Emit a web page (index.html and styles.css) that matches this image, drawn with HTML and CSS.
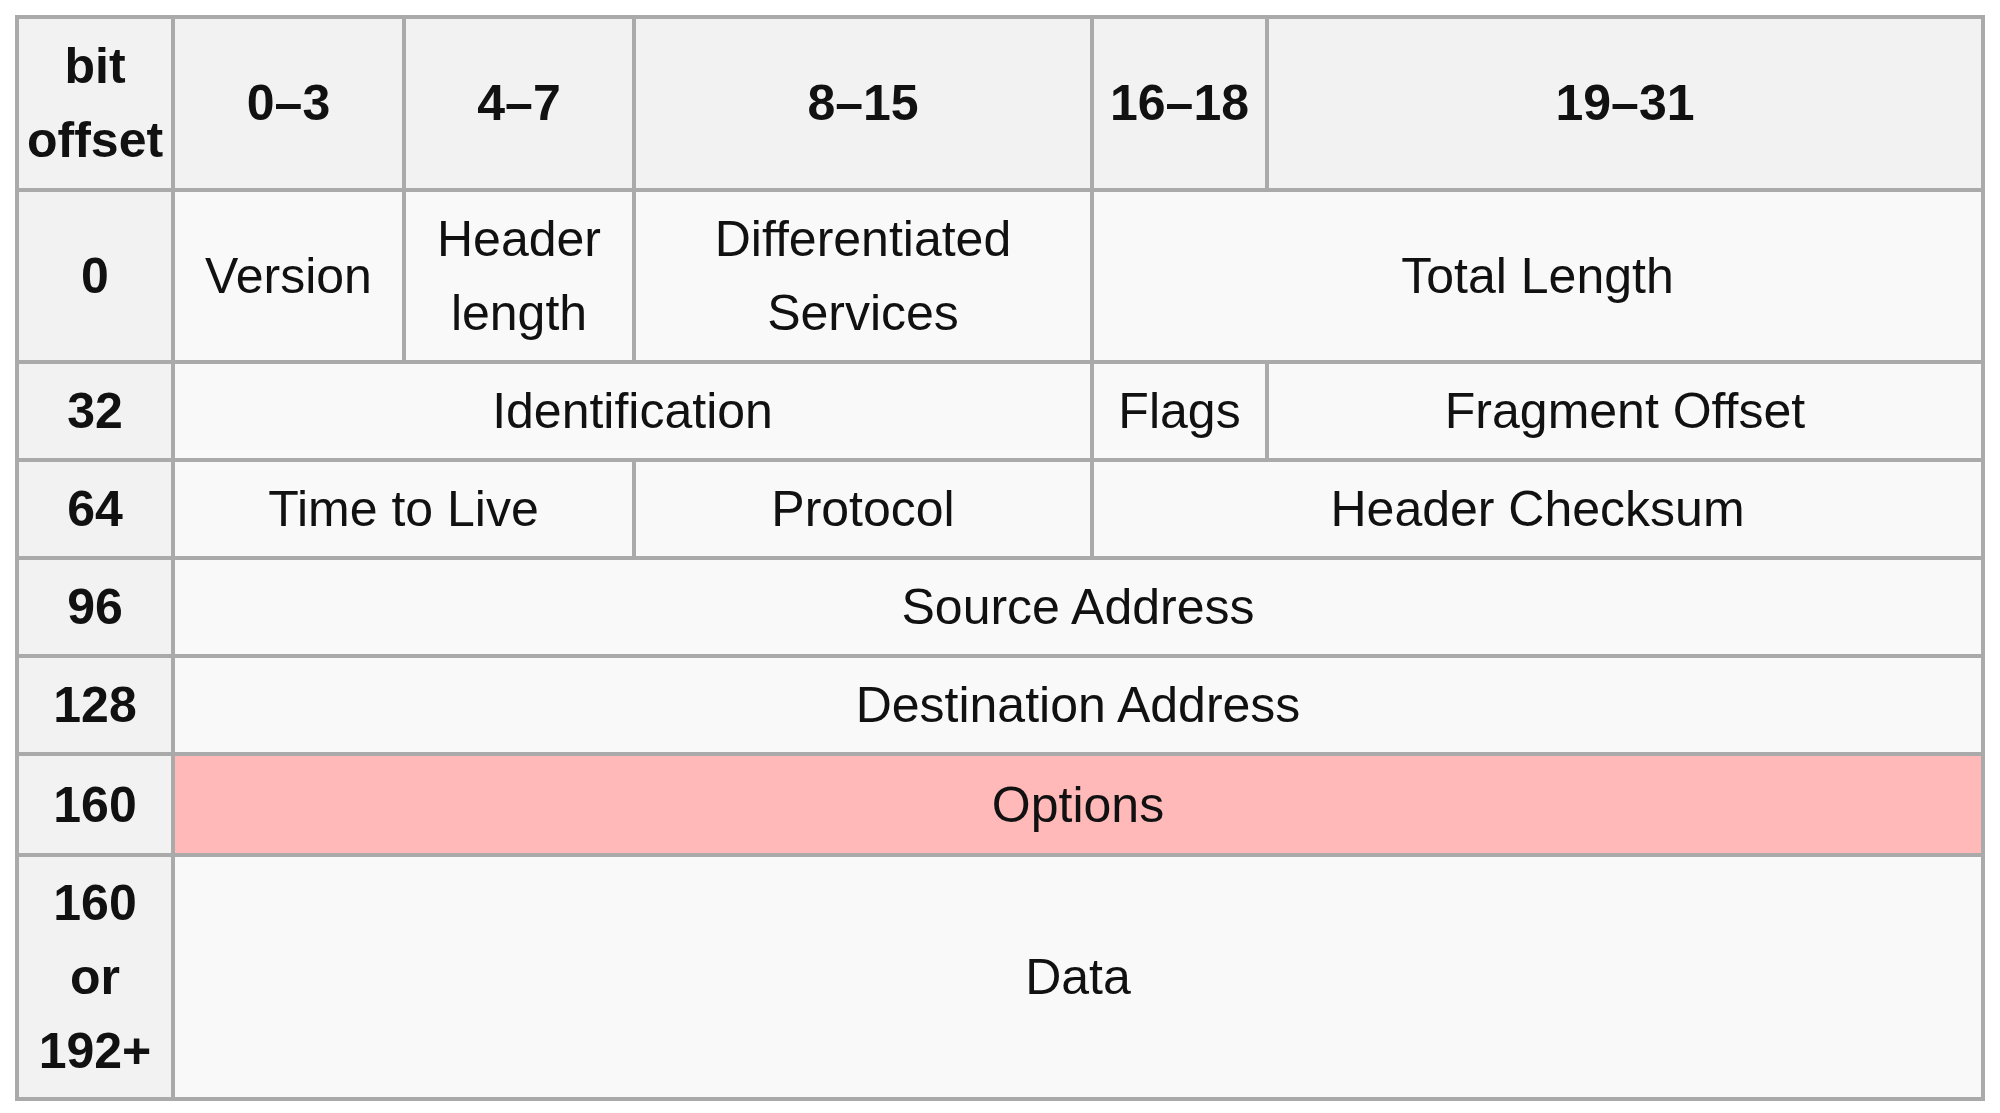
FILE: index.html
```html
<!DOCTYPE html>
<html>
<head>
<meta charset="utf-8">
<link rel="stylesheet" href="styles.css">
</head>
<body>
<table class="ipv4">
  <colgroup>
    <col class="c-off">
    <col class="c-a">
    <col class="c-b">
    <col class="c-c">
    <col class="c-d">
    <col class="c-e">
  </colgroup>
  <tr class="r-head">
    <th>bit<br>offset</th>
    <th>0–3</th>
    <th>4–7</th>
    <th>8–15</th>
    <th>16–18</th>
    <th>19–31</th>
  </tr>
  <tr>
    <th>0</th>
    <td>Version</td>
    <td>Header<br>length</td>
    <td>Differentiated<br>Services</td>
    <td colspan="2">Total Length</td>
  </tr>
  <tr>
    <th>32</th>
    <td colspan="3">Identification</td>
    <td>Flags</td>
    <td>Fragment Offset</td>
  </tr>
  <tr>
    <th>64</th>
    <td colspan="2">Time to Live</td>
    <td>Protocol</td>
    <td colspan="2">Header Checksum</td>
  </tr>
  <tr>
    <th>96</th>
    <td colspan="5">Source Address</td>
  </tr>
  <tr>
    <th>128</th>
    <td colspan="5">Destination Address</td>
  </tr>
  <tr class="r-opt">
    <th>160</th>
    <td colspan="5" class="opt">Options</td>
  </tr>
  <tr class="r-data">
    <th>160<br>or<br>192+</th>
    <td colspan="5">Data</td>
  </tr>
</table>
</body>
</html>
```

FILE: styles.css
```css
html, body {
  margin: 0;
  padding: 0;
  background: #ffffff;
}

body {
  padding: 15px;
  font-family: "Liberation Sans", Arial, sans-serif;
  color: #111111;
}

.ipv4 {
  border-collapse: collapse;
  table-layout: fixed;
  width: 1970px;
  border: 4px solid #aaaaaa;
  font-size: 50px;
  line-height: 74px;
}

.c-off { width: 156px; }
.c-a { width: 231px; }
.c-b { width: 230px; }
.c-c { width: 458px; }
.c-d { width: 175px; }
.c-e { width: 716px; }

.ipv4 th,
.ipv4 td {
  border: 4px solid #aaaaaa;
  padding: 10px 8px;
  text-align: center;
  vertical-align: middle;
  white-space: nowrap;
}

.ipv4 th {
  background: #f2f2f2;
  font-weight: bold;
}

.ipv4 td {
  background: #f9f9f9;
  font-weight: normal;
}

.ipv4 td.opt {
  background: #ffb9b9;
}

.r-head th {
  padding-bottom: 11px;
}

.r-opt th,
.r-opt td {
  padding-top: 12px;
  padding-bottom: 11px;
}

.r-data th,
.r-data td {
  padding-top: 9px;
  padding-bottom: 9px;
}
```
